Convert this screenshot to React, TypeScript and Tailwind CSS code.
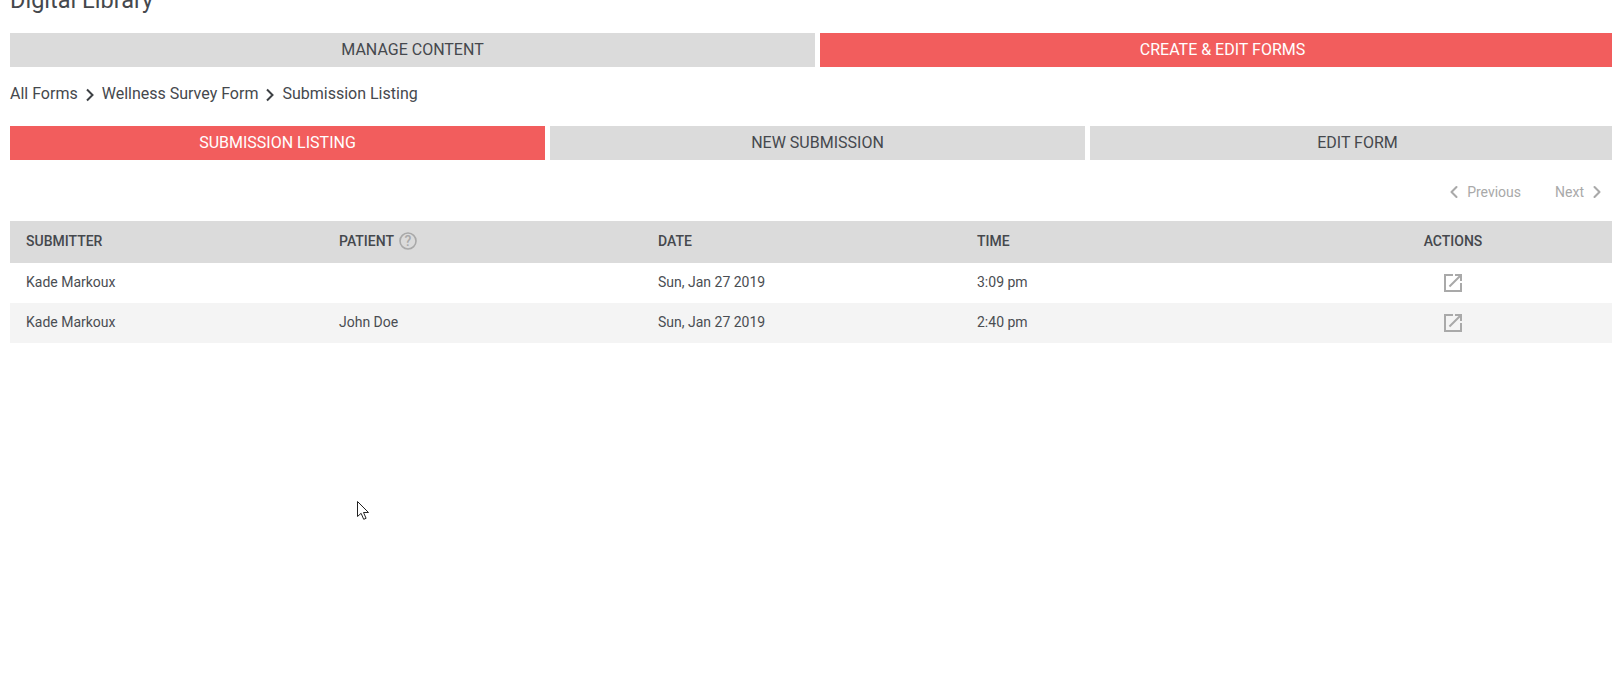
import { ChevronLeft, ChevronRight } from "lucide-react";

const rows = [
  { submitter: "Kade Markoux", patient: "", date: "Sun, Jan 27 2019", time: "3:09 pm" },
  { submitter: "Kade Markoux", patient: "John Doe", date: "Sun, Jan 27 2019", time: "2:40 pm" },
];

function Tab({ label, active }: { label: string; active?: boolean }) {
  return (
    <div
      className={`flex h-[34px] flex-1 items-center justify-center text-[16px] ${
        active ? "bg-[#f25d5d] text-white" : "bg-[#dbdbdb] text-[#45484d]"
      }`}
    >
      {label}
    </div>
  );
}

function Crumb() {
  return (
    <svg width="10" height="14" viewBox="0 0 10 14" className="mx-[7px] mt-[1px]" fill="none" stroke="#3d4044" strokeWidth="2">
      <path d="M2 1.5 7.5 7 2 12.5" />
    </svg>
  );
}

function OpenIcon() {
  return (
    <svg width="24" height="24" viewBox="0 0 24 24" fill="#a9a9a9">
      <path d="M19 19H5V5h7V3H3v18h18v-9h-2v7zM14 3v2h3.59l-9.83 9.83 1.41 1.41L19 6.41V10h2V3h-7z" />
    </svg>
  );
}

export default function App() {
  return (
    <div className="relative h-[690px] w-[1612px] overflow-hidden bg-white font-['Roboto',sans-serif] text-[#45484d]">
      {/* Content runs a little wider than the window, as in the capture */}
      <div className="ml-[10px] w-[1615px]">
        {/* Title is cut off by the top of the page */}
        <h1 className="mt-[-14px] h-[47px] text-[23.5px] leading-[28px] text-[#45484d]">Digital Library</h1>

        <div className="flex gap-[5px]">
          <Tab label="MANAGE CONTENT" />
          <Tab label="CREATE & EDIT FORMS" active />
        </div>

        <div className="mt-[17px] flex h-[20px] items-center text-[16px]">
          <span>All Forms</span>
          <Crumb />
          <span>Wellness Survey Form</span>
          <Crumb />
          <span>Submission Listing</span>
        </div>

        <div className="mt-[22px] flex gap-[5px]">
          <Tab label="SUBMISSION LISTING" active />
          <Tab label="NEW SUBMISSION" />
          <Tab label="EDIT FORM" />
        </div>

        <div className="mt-[22px] flex h-[20px] w-[1597px] items-center justify-end text-[14px] text-[#a9a9a9]">
          <ChevronLeft size={20} strokeWidth={2.5} className="mr-[3px]" />
          <span>Previous</span>
          <span className="ml-[34px]">Next</span>
          <ChevronRight size={20} strokeWidth={2.5} className="ml-[3px]" />
        </div>

        <div className="mt-[19px]">
          <div className="grid h-[42px] grid-cols-[313px_319px_319px_1fr_344px] items-center bg-[#dbdbdb] pl-[16px] pb-[2px] text-[14px] font-medium text-[#45484d]">
            <div>SUBMITTER</div>
            <div className="flex items-center gap-[4px]">
              PATIENT
              <svg width="20" height="20" viewBox="0 0 20 20" fill="none">
                <circle cx="10" cy="10" r="8" stroke="#a9a9a9" strokeWidth="1.6" />
                <text x="10" y="15" textAnchor="middle" fontSize="14" fontWeight="500" fill="#a9a9a9" fontFamily="Roboto, sans-serif">?</text>
              </svg>
            </div>
            <div>DATE</div>
            <div>TIME</div>
            <div className="text-center">ACTIONS</div>
          </div>
          {rows.map((row, i) => (
            <div
              key={i}
              className={`grid h-[40px] grid-cols-[313px_319px_319px_1fr_344px] items-center pl-[16px] text-[14px] text-[#4a4d52] ${
                i % 2 ? "bg-[#f4f4f4]" : "bg-white"
              }`}
            >
              <div className="pb-[2px]">{row.submitter}</div>
              <div className="pb-[2px]">{row.patient}</div>
              <div className="pb-[2px]">{row.date}</div>
              <div className="pb-[2px]">{row.time}</div>
              <div className="flex justify-center">
                <OpenIcon />
              </div>
            </div>
          ))}
        </div>
      </div>

      {/* Mouse pointer caught in the screenshot */}
      <svg width="14" height="21" viewBox="0 0 14 21" className="absolute left-[357px] top-[501px]" fill="#fff" stroke="#222" strokeWidth="1">
        <path d="M.5.5v15l3.6-3.2 2.6 6 2.4-1-2.6-5.8h5z" />
      </svg>
    </div>
  );
}
